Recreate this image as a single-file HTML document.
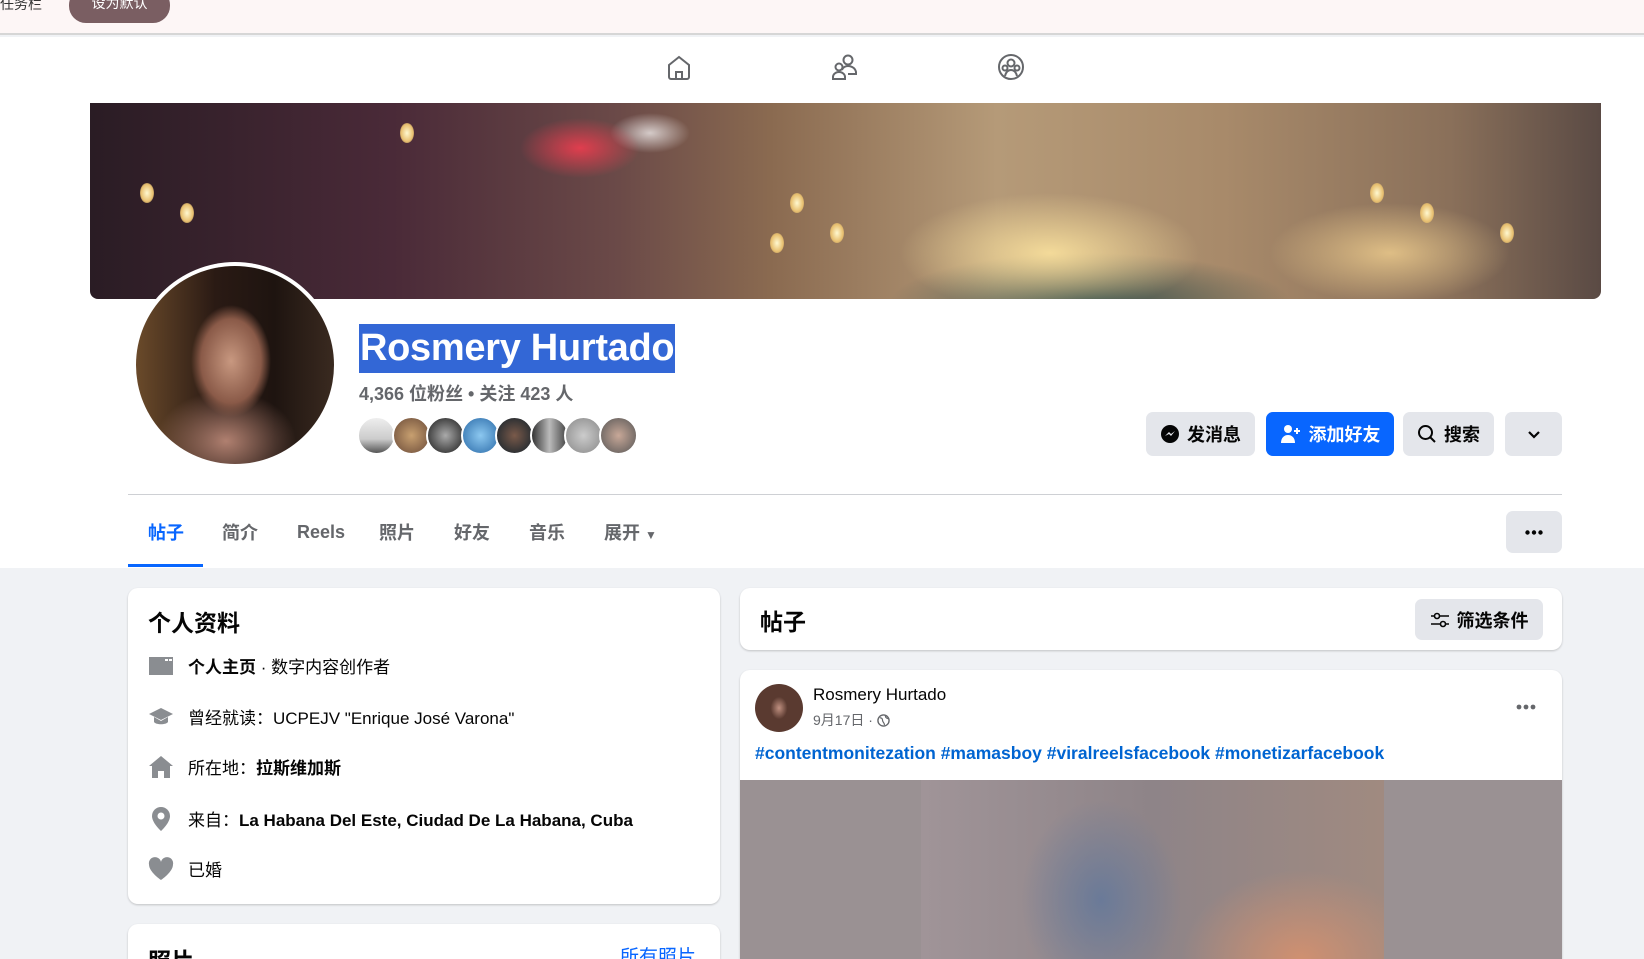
<!DOCTYPE html>
<html style="width:1644px;height:959px;overflow:hidden"><head><meta charset="utf-8">
<style>
*{margin:0;padding:0;box-sizing:border-box}
body{width:1644px;height:959px;overflow:hidden;background:#f0f2f5;font-family:"Liberation Sans","Noto Sans CJK SC",sans-serif;color:#050505;position:relative}
.abs{position:absolute}
.topbar{left:0;top:0;width:1644px;height:35px;background:#fdf6f6;border-bottom:2px solid #d6d6d6}
.nav{left:0;top:37px;width:1644px;height:66px;background:#fff}
.white{left:0;top:103px;width:1644px;height:465px;background:#fff}
.cover{left:90px;top:103px;width:1511px;height:196px;border-radius:0 0 8px 8px;overflow:hidden;
background:
radial-gradient(ellipse 60px 30px at 490px 45px,rgba(255,60,80,.8),transparent),
radial-gradient(ellipse 40px 20px at 560px 30px,rgba(255,255,255,.7),transparent),
radial-gradient(ellipse 150px 60px at 960px 150px,rgba(255,230,160,.85),transparent),
radial-gradient(ellipse 120px 50px at 1300px 150px,rgba(255,220,150,.7),transparent),
radial-gradient(ellipse 200px 50px at 1000px 200px,rgba(40,70,70,.9),transparent),
linear-gradient(90deg,#2a1c24 0%,#4a2a38 20%,#6b4a48 35%,#8a6a50 45%,#b59a78 60%,#a88a6a 75%,#8a705a 90%,#5a4a44 100%)}
.cover .lamp{position:absolute;width:14px;height:20px;border-radius:50%;background:radial-gradient(#fff8d0,#e8c070 60%,transparent)}
.avatar{left:132px;top:262px;width:206px;height:206px;border-radius:50%;background:#fff;padding:4px}
.avatar div{width:100%;height:100%;border-radius:50%;background:radial-gradient(ellipse 50px 70px at 95px 95px,#c89880,#8a5a48 60%,transparent 80%),radial-gradient(ellipse 70px 50px at 90px 175px,#b08070,transparent),linear-gradient(90deg,#6a4a2a,#2a1a14 40%,#1e1410 70%,#3a2a20)}
.name{left:359px;top:324px;height:49px;background:#3367d6;color:#fff;font-size:38px;font-weight:bold;line-height:49px;padding:0 1px;letter-spacing:-.3px}
.stats{left:359px;top:380px;font-size:18px;color:#65676b;font-weight:bold}
.fr{top:416px;width:39px;height:39px;border-radius:50%;border:2px solid #fff}
.btn{top:412px;height:44px;border-radius:7px;background:#e4e6eb;font-size:18px;font-weight:bold;display:flex;align-items:center;justify-content:center;gap:7px}
.divider{left:128px;top:494px;width:1434px;height:1px;background:#ced0d4}
.tab{top:519px;font-size:18px;font-weight:bold;color:#65676b}
.card{background:#fff;border-radius:10px;box-shadow:0 1px 2px rgba(0,0,0,.2)}
.row{left:148px;font-size:17px;display:flex;align-items:center;gap:14px}
.ic{width:26px;height:24px;display:flex;align-items:center;justify-content:center}
</style></head><body>
<div class="abs topbar">
 <div class="abs" style="left:0;top:-6px;font-size:14px;color:#333">任务栏</div>
 <div class="abs" style="left:69px;top:-12px;width:101px;height:35px;border-radius:17px;background:#7a5e62;color:#fff;font-size:14px;text-align:center;line-height:30px">设为默认</div>
</div>
<div class="abs nav">
 <svg class="abs" style="left:665px;top:16px" width="28" height="28" viewBox="0 0 28 28" fill="none" stroke="#65676b" stroke-width="2"><path d="M4 12L14 4l10 8v12a2 2 0 0 1-2 2H6a2 2 0 0 1-2-2z"/><path d="M11 26v-7h6v7"/></svg>
 <svg class="abs" style="left:830px;top:16px" width="30" height="28" viewBox="0 0 30 28" fill="none" stroke="#65676b" stroke-width="2"><circle cx="18" cy="7" r="4.5"/><path d="M12 17c1-3 4-4 6-4s7 1 8 6v2h-8"/><circle cx="9" cy="14" r="3.5"/><path d="M3 26v-2c0-3 3-5 6-5s6 2 6 5v2z"/></svg>
 <svg class="abs" style="left:997px;top:16px" width="28" height="28" viewBox="0 0 28 28" fill="none" stroke="#65676b" stroke-width="2"><circle cx="14" cy="14" r="12"/><circle cx="14" cy="10" r="3.5"/><circle cx="8" cy="15" r="2.5"/><circle cx="20" cy="15" r="2.5"/><path d="M8 23c1-4 3-6 6-6s5 2 6 6"/></svg>
</div>
<div class="abs white"></div>
<div class="abs cover">
 <div class="lamp" style="left:50px;top:80px"></div><div class="lamp" style="left:90px;top:100px"></div><div class="lamp" style="left:310px;top:20px"></div><div class="lamp" style="left:680px;top:130px"></div><div class="lamp" style="left:700px;top:90px"></div><div class="lamp" style="left:740px;top:120px"></div><div class="lamp" style="left:1330px;top:100px"></div><div class="lamp" style="left:1410px;top:120px"></div><div class="lamp" style="left:1280px;top:80px"></div>
</div>
<div class="abs avatar"><div></div></div>
<div class="abs name">Rosmery Hurtado</div>
<div class="abs stats">4,366 位粉丝 • 关注 423 人</div>
<div class="abs fr" style="left:357px;background:linear-gradient(#eee,#ccc 60%,#555)"></div>
<div class="abs fr" style="left:392px;background:radial-gradient(#c8a070,#6a4a38)"></div>
<div class="abs fr" style="left:426px;background:radial-gradient(#aaa,#444 70%,#ddd)"></div>
<div class="abs fr" style="left:461px;background:radial-gradient(#8cc8f0,#2a6aa8)"></div>
<div class="abs fr" style="left:495px;background:radial-gradient(#7a5a4a,#10202a)"></div>
<div class="abs fr" style="left:530px;background:linear-gradient(90deg,#333,#bbb,#444)"></div>
<div class="abs fr" style="left:564px;background:radial-gradient(#ccc,#888)"></div>
<div class="abs fr" style="left:599px;background:radial-gradient(#c8a898,#555)"></div>

<div class="abs btn" style="left:1146px;width:109px"><svg width="20" height="20" viewBox="0 0 20 20"><circle cx="10" cy="10" r="9" fill="#050505"/><path d="M5 12l4-4 2 2 4-3-4 5-2-2z" fill="#e4e6eb"/></svg>发消息</div>
<div class="abs btn" style="left:1266px;width:128px;background:#0866ff;color:#fff"><svg width="22" height="20" viewBox="0 0 22 20" fill="#fff"><circle cx="8" cy="5" r="4"/><path d="M1 19c0-5 3-8 7-8s7 3 7 8z"/><path d="M16 4h2v2h2v2h-2v2h-2V8h-2V6h2z"/></svg>添加好友</div>
<div class="abs btn" style="left:1403px;width:91px"><svg width="20" height="20" viewBox="0 0 20 20" fill="none" stroke="#050505" stroke-width="2"><circle cx="8.5" cy="8.5" r="6.5"/><path d="M13.5 13.5L18 18"/></svg>搜索</div>
<div class="abs btn" style="left:1505px;width:57px"><svg width="14" height="10" viewBox="0 0 14 10" fill="none" stroke="#050505" stroke-width="2.2"><path d="M2 3l5 5 5-5"/></svg></div>

<div class="abs divider"></div>
<div class="abs tab" style="left:148px;color:#0866ff">帖子</div>
<div class="abs" style="left:128px;top:564px;width:75px;height:3px;background:#0866ff"></div>
<div class="abs tab" style="left:222px">简介</div>
<div class="abs tab" style="left:297px;top:522px">Reels</div>
<div class="abs tab" style="left:379px">照片</div>
<div class="abs tab" style="left:454px">好友</div>
<div class="abs tab" style="left:529px">音乐</div>
<div class="abs tab" style="left:604px">展开 <span style="font-size:12px">▼</span></div>
<div class="abs btn" style="left:1506px;top:511px;height:42px;width:56px"><svg width="18" height="5" viewBox="0 0 18 5" fill="#050505"><circle cx="2.5" cy="2.5" r="2.2"/><circle cx="9" cy="2.5" r="2.2"/><circle cx="15.5" cy="2.5" r="2.2"/></svg></div>

<div class="abs card" style="left:128px;top:588px;width:592px;height:316px"></div>
<div class="abs" style="left:148px;top:604px;font-size:23px;font-weight:bold">个人资料</div>
<div class="abs row" style="top:653px"><div class="ic"><svg width="26" height="22" viewBox="0 0 26 22"><rect x="1" y="2" width="24" height="18" fill="#8a8d91"/><rect x="17" y="4" width="3" height="2" fill="#fff"/><rect x="21" y="4" width="3" height="2" fill="#fff"/></svg></div><span><b>个人主页</b> · 数字内容创作者</span></div>
<div class="abs row" style="top:704px"><div class="ic"><svg width="26" height="22" viewBox="0 0 26 22" fill="#8a8d91"><path d="M13 2L1 8l12 6 12-6z"/><path d="M6 11v5c2 3 12 3 14 0v-5l-7 4z"/></svg></div><span>曾经就读：UCPEJV "Enrique José Varona"</span></div>
<div class="abs row" style="top:754px"><div class="ic"><svg width="26" height="24" viewBox="0 0 26 24" fill="#8a8d91"><path d="M13 1L1 11h3v12h6v-7h6v7h6V11h3z"/></svg></div><span>所在地：<b>拉斯维加斯</b></span></div>
<div class="abs row" style="top:806px"><div class="ic"><svg width="22" height="26" viewBox="0 0 22 26" fill="#8a8d91"><path d="M11 1a9 9 0 0 0-9 9c0 7 9 15 9 15s9-8 9-15a9 9 0 0 0-9-9z"/><circle cx="11" cy="10" r="3.5" fill="#fff"/></svg></div><span>来自：<b>La Habana Del Este, Ciudad De La Habana, Cuba</b></span></div>
<div class="abs row" style="top:856px"><div class="ic"><svg width="26" height="24" viewBox="0 0 26 24" fill="#8a8d91"><path d="M13 23S1 15 1 7.5A6 6 0 0 1 13 5a6 6 0 0 1 12 2.5C25 15 13 23 13 23z"/></svg></div><span>已婚</span></div>

<div class="abs card" style="left:128px;top:924px;width:592px;height:35px;border-radius:10px 10px 0 0;overflow:hidden">
 <div class="abs" style="left:20px;top:18px;font-size:23px;font-weight:bold">照片</div>
 <div class="abs" style="left:492px;top:18px;font-size:19px;color:#0866ff">所有照片</div>
</div>

<div class="abs card" style="left:740px;top:588px;width:822px;height:62px"></div>
<div class="abs" style="left:760px;top:603px;font-size:23px;font-weight:bold">帖子</div>
<div class="abs btn" style="left:1415px;top:599px;width:128px;height:41px;font-size:18px"><svg width="20" height="16" viewBox="0 0 20 16" fill="none" stroke="#050505" stroke-width="1.6"><path d="M1 4h3M10 4h9M1 12h9M16 12h3"/><circle cx="7" cy="4" r="2.5"/><circle cx="13" cy="12" r="2.5"/></svg>筛选条件</div>

<div class="abs card" style="left:740px;top:670px;width:822px;height:289px;overflow:hidden;border-radius:10px 10px 0 0">
 <div class="abs" style="left:15px;top:14px;width:48px;height:48px;border-radius:50%;background:radial-gradient(ellipse 12px 16px at 24px 24px,#c09080,#5a3a30 70%),#2a1a14"></div>
 <div class="abs" style="left:73px;top:15px;font-size:17px">Rosmery Hurtado</div>
 <div class="abs" style="left:73px;top:40px;font-size:14px;color:#65676b">9月17日 · <svg width="13" height="13" viewBox="0 0 14 14" style="vertical-align:-2px"><circle cx="7" cy="7" r="6" fill="none" stroke="#65676b" stroke-width="1.5"/><path d="M3 4c2 0 3 1 3 3s2 2 2 5M9 2c0 2 2 3 4 3" fill="none" stroke="#65676b" stroke-width="1.3"/></svg></div>
 <svg class="abs" style="left:776px;top:34px" width="20" height="6" viewBox="0 0 20 6" fill="#65676b"><circle cx="3" cy="3" r="2.4"/><circle cx="10" cy="3" r="2.4"/><circle cx="17" cy="3" r="2.4"/></svg>
 <div class="abs" style="left:15px;top:73px;font-size:17.5px;color:#0064d1;font-weight:600">#contentmonitezation #mamasboy #viralreelsfacebook #monetizarfacebook</div>
 <div class="abs" style="left:0;top:110px;width:822px;height:179px;background:#9a9193"></div>
 <div class="abs" style="left:181px;top:110px;width:463px;height:179px;background:radial-gradient(ellipse 80px 100px at 180px 120px,#6a7a98,transparent),radial-gradient(ellipse 120px 90px at 380px 180px,#d09070,transparent),linear-gradient(90deg,#a09498,#8e8488 50%,#a08a80)"></div>
</div>
</body></html>
